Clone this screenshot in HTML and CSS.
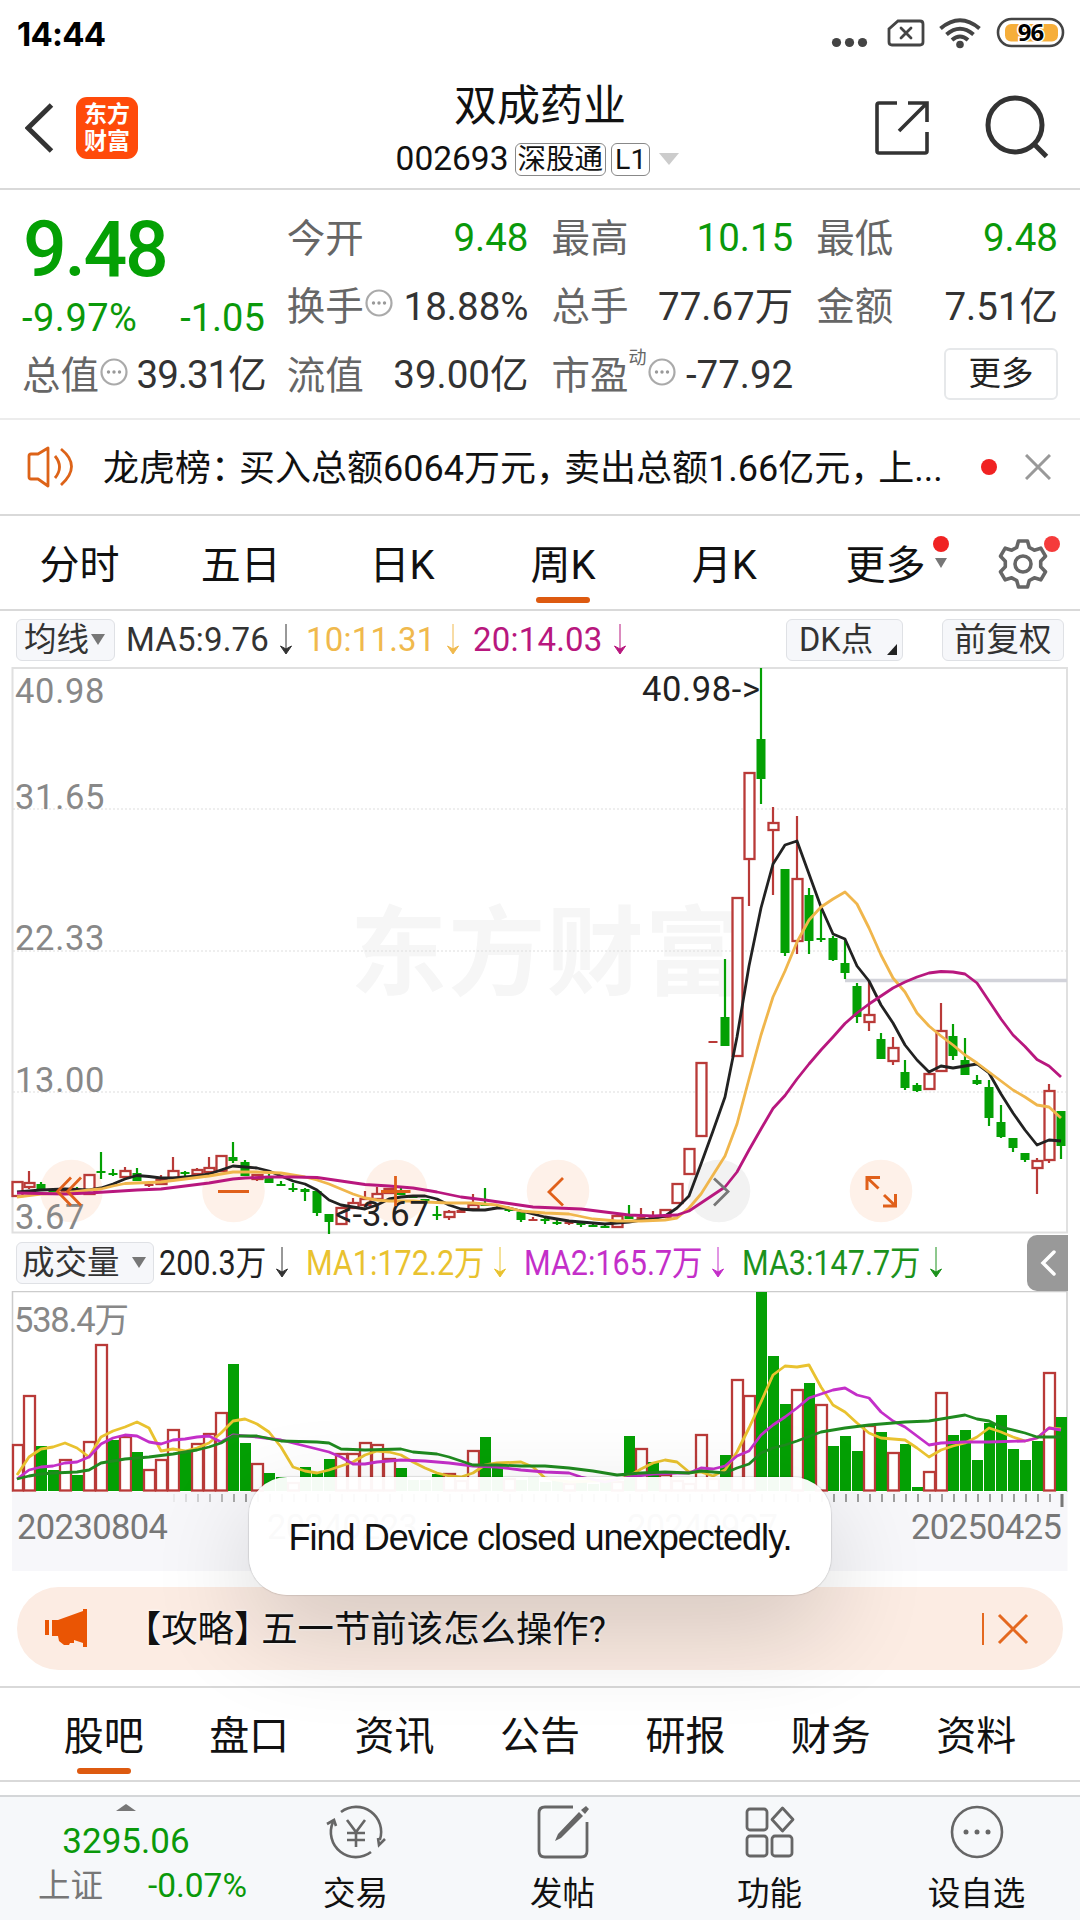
FILE: index.html
```html
<!DOCTYPE html>
<html lang="zh-CN">
<head>
<meta charset="utf-8">
<title>双成药业 002693</title>
<link rel="stylesheet" href="styles.css">
</head>
<body>
<div class="screen">
  <div class="status">
    <span class="clock">14:44</span>
    <svg class="status-icons" width="250" height="50" viewBox="824 8 250 50">
      <g fill="#444"><circle cx="836.500" cy="42.500" r="4.600"/><circle cx="849.500" cy="42.500" r="4.600"/><circle cx="862.500" cy="42.500" r="4.600"/></g>
      <path d="M898 21h22q3 0 3 3v18q0 3-3 3h-28q-3 0-3-3V29z" fill="none" stroke="#444" stroke-width="2.800"/>
      <path d="M901 28l10 10M911 28l-10 10" stroke="#444" stroke-width="2.800" stroke-linecap="round"/>
      <g fill="none" stroke="#444" stroke-width="4"><path d="M940.500 28.500Q960 12 979.500 28.500"/><path d="M946.500 34.500Q960 23 973.500 34.500"/><path d="M952 40Q960 33 968 40"/></g>
      <circle cx="960" cy="44.500" r="3.800" fill="#444"/>
      <rect x="998" y="19" width="65" height="27" rx="13.500" fill="#fff" stroke="#444" stroke-width="2.600"/>
      <rect x="1005" y="24" width="53" height="17.500" rx="6" fill="#f6ae3a"/>
      <text x="1030.500" y="41" text-anchor="middle" class="battery">96</text>
    </svg>
  </div>
  <header class="head">
    <svg class="back" width="30" height="50" viewBox="0 0 30 50"><path d="M26.500 2L3 25l23.500 23" fill="none" stroke="#333" stroke-width="5"/></svg>
    <div class="logo"><span>东方</span><span>财富</span></div>
    <div class="title">
      <h1>双成药业</h1>
      <div class="code"><span>002693</span><b>深股通</b><b class="level">L1</b><i></i></div>
    </div>
    <svg class="share" width="54" height="54" viewBox="0 0 54 54"><path d="M22 2H4Q2 2 2 4v46q0 2 2 2h46q2 0 2-2V31M33 2h19v19M52 2L24 30" fill="none" stroke="#333" stroke-width="3.600"/></svg>
    <svg class="search" width="66" height="66" viewBox="0 0 66 66"><circle cx="30" cy="31" r="27" fill="none" stroke="#333" stroke-width="5"/><path d="M48 49l13.500 13.500" stroke="#333" stroke-width="5"/></svg>
  </header>

  <section class="quote">
    <div class="now"><strong>9.48</strong><div class="pair green"><span>-9.97%</span><span>-1.05</span></div></div>
    <div class="cell"><label>今开</label><span class="green">9.48</span></div>
    <div class="cell"><label>最高</label><span class="green">10.15</span></div>
    <div class="cell"><label>最低</label><span class="green">9.48</span></div>
    <div class="cell"><label>换手<svg class="info" viewBox="0 0 28 28"><use href="#info"/></svg></label><span>18.88%</span></div>
    <div class="cell"><label>总手</label><span>77.67万</span></div>
    <div class="cell"><label>金额</label><span>7.51亿</span></div>
    <div class="cell tight"><label>总值<svg class="info" viewBox="0 0 28 28"><use href="#info"/></svg></label><span>39.31亿</span></div>
    <div class="cell"><label>流值</label><span>39.00亿</span></div>
    <div class="cell"><label>市盈<sup>动</sup><svg class="info" viewBox="0 0 28 28"><use href="#info"/></svg></label><span>-77.92</span></div>
    <button class="more">更多</button>
  </section>
  <svg class="defs" width="0" height="0"><defs>
    <g id="info"><circle cx="14" cy="14" r="12.500" fill="none" stroke="#aaa" stroke-width="2.200"/><g fill="#999"><circle cx="8.500" cy="14" r="1.700"/><circle cx="14" cy="14" r="1.700"/><circle cx="19.500" cy="14" r="1.700"/></g></g>
    <path id="down" d="M7 0v29M1.500 22L7 30l5.500-8L7 25z" stroke="currentColor" stroke-width="1" fill="currentColor"/>
  </defs></svg>

  <section class="notice">
    <svg width="48" height="42" viewBox="0 0 48 42"><path d="M2 10q0-2 2-2h7L21 2v38L11 33H4q-2 0-2-2zM28 10q9 11 0 22M34 3q21 17 0 36" fill="none" stroke="#dd6318" stroke-width="2.800" stroke-linejoin="round"/></svg>
    <p>龙虎榜<u>：</u>买入总额6064万元<u>，</u>卖出总额1.66亿元<u>，</u>上...</p>
    <i class="dot"></i>
    <svg class="close" width="26" height="26" viewBox="0 0 26 26"><path d="M1 1l24 24M25 1L1 25" stroke="#999" stroke-width="3"/></svg>
  </section>

  <nav class="periods">
    <a>分时</a><a>五日</a><a>日K</a><a class="on">周K</a><a>月K</a><a class="morek">更多<i class="dot"></i><i class="tri"></i></a>
    <span class="gear"><svg width="50" height="50" viewBox="0 0 50 50"><path d="M20.500 2h9l1.800 6.500 5 2.700 6.500-2 4.700 8-4.800 5v5.600l4.800 5-4.700 8-6.500-2-5 2.700L29.500 48h-9l-1.800-6.500-5-2.700-6.500 2-4.700-8 4.800-5v-5.600l-4.800-5 4.700-8 6.500 2 5-2.700z" fill="none" stroke="#666" stroke-width="3.600" stroke-linejoin="round"/><circle cx="25" cy="25" r="8" fill="none" stroke="#666" stroke-width="3.600"/></svg><i class="dot"></i></span>
  </nav>

  <div class="legend">
    <span class="chip avg">均线<i class="tri"></i></span>
    <span class="ma ma5">MA5:9.76</span><svg class="arrow a5" viewBox="0 0 14 32"><use href="#down"/></svg>
    <span class="ma ma10">10:11.31</span><svg class="arrow a10" viewBox="0 0 14 32"><use href="#down"/></svg>
    <span class="ma ma20">20:14.03</span><svg class="arrow a20" viewBox="0 0 14 32"><use href="#down"/></svg>
    <span class="chip dk">DK点<i class="corner"></i></span>
    <span class="chip adj">前复权</span>
  </div>
  <svg id="price" class="plot" width="1080" height="567" viewBox="0 667 1080 567"></svg>

  <div class="legend vol">
    <span class="chip kind">成交量<i class="tri"></i></span>
    <span class="v v0"><em>200.3万</em></span><svg class="arrow" viewBox="0 0 14 32"><use href="#down"/></svg>
    <span class="v y"><em>MA1:172.2万</em></span><svg class="arrow y" viewBox="0 0 14 32"><use href="#down"/></svg>
    <span class="v p"><em>MA2:165.7万</em></span><svg class="arrow p" viewBox="0 0 14 32"><use href="#down"/></svg>
    <span class="v g"><em>MA3:147.7万</em></span><svg class="arrow g" viewBox="0 0 14 32"><use href="#down"/></svg>
    <span class="expand"><svg width="16" height="28" viewBox="0 0 16 28"><path d="M14 3L3 14l11 11" fill="none" stroke="#fff" stroke-width="3.500" stroke-linecap="round"/></svg></span>
  </div>
  <svg id="volume" class="plot" width="1080" height="280" viewBox="0 1291 1080 280"></svg>

  <div class="banner">
    <svg width="44" height="40" viewBox="0 0 44 40"><path d="M1 11h4v15H1zM8 11h6L39 2V0h4v38h-4v-4l-9-3v3h-4l-1 2h-5l-5-4-1-5H8z" fill="#ea5504"/></svg>
    <p><u>【</u>攻略<u>】</u>五一节前该怎么操作?</p>
    <i class="bar"></i>
    <svg width="32" height="32" viewBox="0 0 32 32"><path d="M2 2l28 28M30 2L2 30" stroke="#e4681f" stroke-width="3"/></svg>
  </div>

  <nav class="sections"><a class="on">股吧</a><a>盘口</a><a>资讯</a><a>公告</a><a>研报</a><a>财务</a><a>资料</a></nav>

  <footer class="dock">
    <div class="index"><i></i><b>3295.06</b><p><span>上证</span><em>-0.07%</em></p></div>
    <div class="tool"><svg width="60" height="56" viewBox="0 0 60 56"><g fill="none" stroke="#666" stroke-width="2.600"><path d="M15 8A25 25 0 0 1 53.800 36M45 48A25 25 0 0 1 7 18"/><path d="M1 20l7-4 2 6M59 35l-6 6-1-7"/><path d="M21 16l9 12 9-12M30 28v15M21 29h18M21 36h18"/></g></svg><span>交易</span></div>
    <div class="tool"><svg width="60" height="56" viewBox="0 0 60 56"><path d="M40 3H12q-6 0-6 6v38q0 6 6 6h36q6 0 6-6V18" fill="none" stroke="#666" stroke-width="2.800"/><path d="M53 2l3 3-4 5-4-4zM46 8l4 4-22 22-6 3 3-7z" fill="#666"/></svg><span>发帖</span></div>
    <div class="tool"><svg width="60" height="56" viewBox="0 0 60 56"><g fill="none" stroke="#666" stroke-width="2.800"><rect x="7" y="5" width="20" height="21" rx="3"/><rect x="7" y="32" width="20" height="20" rx="3"/><rect x="32" y="32" width="20" height="20" rx="3"/><path d="M42.500 4L53 15.500 42.500 27 32 15.500z" stroke-linejoin="round"/></g></svg><span>功能</span></div>
    <div class="tool"><svg width="60" height="56" viewBox="0 0 60 56"><circle cx="30" cy="28" r="25" fill="none" stroke="#666" stroke-width="2.600"/><g fill="#666"><circle cx="19" cy="28" r="2.500"/><circle cx="30" cy="28" r="2.500"/><circle cx="41" cy="28" r="2.500"/></g></svg><span>设自选</span></div>
  </footer>
  <div class="toast">Find Device closed unexpectedly.</div>
</div>
<script src="chart.js"></script>
</body>
</html>
```
FILE: styles.css
```css
* { box-sizing: border-box; }
body { margin: 0; background: #fff; color: #111; font-family: Roboto, "Noto Sans CJK SC", sans-serif; }
h1, p { margin: 0; font-weight: 400; }
i, em { font-style: normal; }
u { text-decoration: none; }
a, span { white-space: nowrap; }
.screen { position: relative; width: 1080px; height: 1920px; overflow: hidden; display: flex; flex-direction: column; }
.defs { position: absolute; }
.green { color: #0a990a; }
.dot { width: 16px; height: 16px; border-radius: 50%; background: #f02222; }
.tri { border: 6px solid transparent; border-top: 10px solid #777; border-bottom: 0; }

.status { height: 66px; flex: none; display: flex; justify-content: space-between; padding: 8px 6px 0 17px; }
.clock { font: 700 33px/53px Inter, sans-serif; letter-spacing: -.8px; color: #000; }
.battery { font: 700 24px "Open Sans", sans-serif; stroke: #fff; stroke-width: 3px; paint-order: stroke; letter-spacing: -1px; }

.head { height: 124px; flex: none; border-bottom: 2px solid #d9d9d9; display: flex; padding-left: 25px; }
.back { margin-top: 37px; }
.logo { width: 62px; height: 62px; margin: 31px 0 0 21px; border-radius: 11px; background: #ff4a0a; color: #fff; display: flex; flex-direction: column; align-items: center; padding-top: 4px; font-weight: 700; font-size: 23px; line-height: 27px; }
.title { width: 320px; margin: 14px 0 0 242px; display: flex; flex-direction: column; align-items: center; }
.title h1 { font-size: 43px; line-height: 52px; }
.code { display: flex; align-items: center; height: 34px; margin-top: 10px; font-size: 33.500px; line-height: 34px; margin-left: -5px; }
.code b { font-weight: 400; font-size: 28.500px; line-height: 31px; height: 33px; border: 1.500px solid #888; border-radius: 6px; padding: 0 2px; margin-left: 6px; }
.code .level { padding: 0 3px; margin-left: 5px; }
.code i { border: 10px solid transparent; border-top: 12px solid #ccc; border-bottom: 0; margin-left: 9px; }
.share { margin: 35px 0 0 175px; }
.search { margin: 28px 0 0 56px; }

.quote { height: 230px; flex: none; border-bottom: 2px solid #ececec; padding: 13px 22px 0 23px; display: grid; grid-template-columns: repeat(4, 1fr); column-gap: 24px; grid-template-rows: repeat(3, 68.500px); }
.now { grid-row: span 2; }
.now strong { display: block; font-weight: 500; font-size: 77px; line-height: 94px; letter-spacing: -2.300px; color: #04a004; }
.pair { display: flex; justify-content: space-between; font-size: 38px; line-height: 42px; margin: 0 -1px 0 -1px; }
.pair span:first-child { letter-spacing: .5px; }
.cell { display: flex; justify-content: space-between; align-items: center; font-size: 38.500px; line-height: 48px; color: #333; white-space: nowrap; }
.cell > span { margin-top: 2px; }
.cell label { color: #666; display: flex; align-items: center; margin-top: 3px; margin-left: -1px; }
.cell .green { color: #0a990a; }
.tight > span { letter-spacing: -1px; margin-right: -2px; }
.info { width: 28px; height: 28px; margin-left: 1px; margin-top: -8px; }
.cell sup { font-size: 18px; line-height: 20px; align-self: flex-start; margin-top: -4px; }
.cell sup + .info { margin-left: 1px; }
.more { justify-self: end; align-self: center; width: 114px; height: 52px; border: 2px solid #e6e8ea; border-radius: 6px; background: #fff; font: 32.500px/40px "Noto Sans CJK SC", sans-serif; color: #222; padding: 0 0 6px; }

.notice { height: 96px; flex: none; border-bottom: 2px solid #d9d9d9; display: flex; align-items: center; padding-left: 27px; }
.notice p { width: 850px; margin: -4px 0 0 28px; font-size: 36px; white-space: nowrap; }
.notice u { margin-right: -8px; }
.notice .dot { margin-left: 28px; }
.notice .close { margin-left: 28px; }

.periods { height: 95px; flex: none; border-bottom: 2px solid #d9d9d9; display: flex; font-size: 40px; line-height: 99px; }
.periods a { width: 161.200px; text-align: center; position: relative; left: -1px; }
.on::after { content: ""; position: absolute; left: 50%; bottom: 6px; width: 54px; height: 6px; margin-left: -27px; border-radius: 3px; background: #dd5a10; }
.morek .dot { position: absolute; left: 128px; top: 20px; }
.morek .tri { position: absolute; left: 130px; top: 42px; border-width: 10px 6px 0; }
.gear { position: relative; margin-left: 31px; }
.gear svg { display: block; margin-top: 23px; }
.gear .dot { position: absolute; left: 46px; top: 20px; background: #f53b3b; }

.legend { height: 57px; flex: none; display: flex; align-items: center; padding-left: 16px; font-size: 33px; color: #333; }
.chip { height: 42px; display: flex; align-items: center; border: 1.500px solid #dfe1e5; border-radius: 6px; background: #f6f7fa; color: #333; font-size: 32.500px; line-height: 38px; flex: none; }
.avg { width: 99px; padding-left: 7px; }
.avg .tri { margin-left: 2px; border-width: 11px 7px 0; }
.ma { width: 147px; margin-left: 11px; }
.ma10, .ma20 { width: 140px; margin-left: 13px; letter-spacing: .2px; }
.ma5 { width: 153px; letter-spacing: .2px; }
.arrow { width: 14px; height: 32px; color: #333; flex: none; }
.arrow.a10, .ma10 { color: #f0b94d; }
.arrow.a20, .ma20 { color: #b8177e; }
.dk { width: 117px; margin-left: 159px; padding-left: 12px; position: relative; }
.corner { position: absolute; right: 5px; bottom: 5px; border-left: 10px solid transparent; border-bottom: 11px solid #222; }
.adj { width: 122px; margin-left: 39px; padding-left: 11px; }

.plot { display: block; flex: none; }
#price { margin-top: -1px; }
.plot text { font-size: 34.500px; fill: #888; }
.plot .mark { fill: #222; }
.plot .ghost { font: 700 97px "Noto Sans CJK SC", sans-serif; fill: #f6f6f6; }

.vol { color: #222; }
.kind { width: 138px; padding-left: 5px; }
.kind .tri { margin-left: 12px; border-width: 11px 7px 0; }
.v { width: 187px; margin-left: 17px; flex: none; }
.v0 { width: 115px; margin-left: 5px; }
.v em { display: inline-block; font-size: 34.500px; transform: scaleX(.885); transform-origin: left; margin-top: -5px; }
.vol .y { color: #e9c22f; } .vol .p { color: #c42fc9; } .vol .g { color: #1c921c; }
.v + .arrow { margin-left: 0; }
.v0 + .arrow { margin-left: 1px; }
.expand { width: 41px; height: 56px; margin-left: auto; margin-right: 12px; background: #999; border-radius: 10px 0 0 10px; display: flex; align-items: center; justify-content: center; }

.banner { flex: none; height: 83px; margin: 16px 17px; border-radius: 42px; background: #fcece3; display: flex; align-items: center; padding-left: 27px; }
.banner p { width: 840px; margin: -5px 0 0 55px; font-size: 36.400px; text-shadow: 0 0 3px #fff, 0 0 3px #fff; white-space: nowrap; }
.banner u { font-feature-settings: "halt"; }
.banner u + u { margin-right: 9px; }
.banner .bar { width: 1.500px; height: 32px; background: #e4681f; margin: 0 13px 0 -1px; }

.sections { height: 96px; flex: none; border: solid #d9d9d9; border-width: 2px 0; padding: 0 31px; display: flex; font-size: 40px; line-height: 97px; }
.sections a { flex: 1; text-align: center; position: relative; }
.dock { margin-top: 13px; height: 126px; flex: none; border-top: 2px solid #d4d6d8; background: #f6f8fa; display: flex; }
.index { width: 252px; display: flex; flex-direction: column; align-items: center; color: #0a990a; }
.index i { border: 10px solid transparent; border-bottom: 7px solid #777; border-top: 0; margin-top: 7px; }
.index b { font-weight: 400; font-size: 35px; line-height: 40px; margin-top: 11px; }
.index p { align-self: stretch; display: flex; justify-content: space-between; padding: 0 5px 0 38px; font-size: 33.500px; line-height: 44px; margin-top: 2px; }
.index p span { color: #777; font-size: 32.500px; }
.tool { width: 207px; display: flex; flex-direction: column; align-items: center; padding-top: 7px; font-size: 32.500px; line-height: 44px; }
.tool span { margin-top: 12px; }

.toast { position: absolute; left: 249px; top: 1477px; width: 582px; height: 118px; border-radius: 38px; background: rgba(255,255,255,.955); box-shadow: 0 0 1px 1px rgba(0,0,0,.1), 0 36px 100px rgba(0,0,0,.16); font: 36px/122px "Liberation Sans", sans-serif; letter-spacing: -.95px; text-align: center; white-space: nowrap; color: #111; }
```
FILE: chart.js
```js
const RED = '#b93a38', GREEN = '#04a004';
const X = i => 17 + i * 12;
const line = (pts, color) => {
  const p = pts.trim().split(/\s+/).map(s => { const [i, y] = s.split(':'); return X(+i) + ',' + y; });
  return `<polyline points="${p.join(' ')}" fill="none" stroke="${color}" stroke-width="2.8" stroke-linejoin="round"/>`;
};

// one entry per week: direction, body top, body bottom, high, low
const weeks = `u 1182 1196 1182 1196|u 1183 1187 1171 1189|g 1184 1189 1182 1189|g 1190 1191 1188 1195|u 1190 1192 1190 1192|g 1189 1191 1187 1192
u 1175 1194 1175 1194|g 1171 1172 1152 1179|g 1173 1174 1169 1176|u 1171 1177 1167 1180|g 1173 1181 1168 1181|u 1184 1185 1182 1187|u 1180 1184 1175 1184
u 1171 1178 1157 1178|g 1172 1174 1171 1177|u 1170 1174 1168 1176|u 1168 1172 1157 1177|u 1156 1171 1156 1171|g 1157 1161 1142 1163|g 1162 1176 1160 1176
u 1175 1179 1175 1181|g 1178 1183 1174 1183|g 1184 1185 1181 1186|g 1188 1189 1183 1192|g 1189 1192 1188 1201|g 1191 1213 1191 1216|g 1214 1222 1214 1234|u 1208 1224 1208 1224
u 1203 1208 1198 1208|u 1199 1205 1191 1205|u 1194 1199 1187 1199|u 1189 1193 1188 1193|g 1190 1195 1188 1195|g 1196 1198 1196 1198|g 1199 1202 1199 1205|g 1214 1216 1206 1220
u 1212 1217 1210 1220|u 1210 1213 1209 1213|u 1205 1209 1194 1209|g 1204 1205 1188 1205|g 1207 1208 1206 1208|g 1209 1211 1208 1212|g 1212 1220 1211 1222|u 1219 1220 1217 1221
g 1219 1220 1217 1224|g 1222 1223 1220 1225|u 1222 1224 1221 1225|g 1223 1225 1222 1227|g 1225 1226 1223 1227|g 1226 1227 1224 1228|u 1216 1227 1216 1227|g 1215 1219 1205 1219
u 1217 1220 1208 1220|u 1217 1219 1211 1219|u 1210 1217 1210 1217|u 1184 1203 1184 1203|u 1149 1174 1149 1174|u 1063 1136 1063 1136|u 1041 1041 1041 1041|g 1017 1046 959 1046
u 898 1056 898 1056|u 773 859 773 906|g 739 779 668 804|u 823 830 807 895|g 869 953 869 956|u 879 941 816 954|g 895 941 888 954|g 938 940 905 942|g 938 960 936 961|g 963 973 939 979
g 986 1017 983 1023|u 1015 1022 981 1031|g 1039 1059 1033 1059|u 1048 1061 1037 1065|g 1072 1088 1060 1090|g 1085 1091 1083 1092|u 1074 1089 1074 1089|u 1031 1071 1003 1071
g 1036 1056 1024 1060|g 1060 1075 1038 1075|g 1080 1084 1075 1085|g 1087 1118 1080 1126|g 1122 1137 1105 1138|g 1138 1148 1138 1152|g 1153 1160 1153 1162|u 1161 1168 1158 1194
u 1091 1160 1084 1163|g 1111 1146 1111 1159`.split(/[|\n]/).map(r => { const a = r.split(' '); return [a[0], ...a.slice(1).map(Number)]; });

const candles = weeks.map(([d, t, b, h, l], i) => {
  const x = X(i), c = d === 'u' ? RED : GREEN;
  let s = '';
  if (h < t) s += `<path d="M${x} ${h}V${t}" stroke="${c}" stroke-width="2.2"/>`;
  if (l > b) s += `<path d="M${x} ${b}V${l}" stroke="${c}" stroke-width="2.2"/>`;
  if (d === 'u' && b - t > 3) s += `<rect x="${x - 4.5}" y="${t}" width="10" height="${b - t}" fill="#fff" stroke="${c}" stroke-width="2.3"/>`;
  else s += `<rect x="${x - 4.5}" y="${t}" width="9" height="${Math.max(2, b - t)}" fill="${c}"/>`;
  return s;
}).join('');

const ma5 = '0:1192 1:1191 2:1190 4:1189 6:1190 7:1188 8:1184 9:1179 10:1175.5 11:1176.5 12:1178 13:1178 15:1176 16:1174 17:1170 18:1166 19:1167 20:1168 21:1171 22:1176 23:1181 24:1184 25:1190 26:1200 27:1205 28:1207 29:1209 30:1205 31:1199 32:1197 33:1196 34:1196 35:1199 36:1205 37:1209 38:1210 39:1210 40:1208 41:1208 42:1211 43:1214 44:1217 45:1219 46:1221 47:1222 48:1223 49:1224 50:1223 51:1222 52:1220 53:1219 54:1216 55:1208 56:1196 57:1164 58:1131 59:1097 60:1037 61:966 62:908 63:864 64:845 65:841 66:874 67:907 68:934 69:939 70:966 71:981 72:1005 73:1023 74:1045 75:1060 76:1072 77:1066 78:1068 79:1066 80:1064 81:1073 82:1094 83:1113 84:1130 85:1145 86:1140 87:1141';
const ma10 = '0:1197 2:1194 4:1193 6:1190 7:1189 8:1186 9:1183.5 10:1183 12:1182 14:1179 16:1176 18:1172 20:1172 22:1173 24:1177 25:1180 26:1184 28:1194 29:1198 30:1200 31:1201 33:1201 34:1202 36:1203 38:1203 40:1205 42:1211 44:1213 46:1214 48:1219 50:1221 52:1221 54:1220 55:1218 56:1208 57:1194 58:1175 59:1156 60:1124 61:1079 62:1035 63:997 64:971 65:942 66:920 67:907 68:899 69:892 70:904 71:928 72:955 73:978 74:992 75:1013 76:1026 77:1036 78:1045 79:1055 80:1063 81:1072 82:1081 83:1090 84:1097 85:1105 86:1107 87:1118';
const ma20 = '0:1193 4:1194 6:1193 8:1191.5 10:1190 12:1189 14:1186 16:1183 18:1179 19:1178 21:1177 23:1177 25:1177.5 27:1181 29:1184.5 31:1186 33:1188 35:1192 37:1197 39:1200 41:1203.5 43:1207 45:1208 47:1209 49:1212 51:1215 53:1216 55:1215 56:1211 57:1203 58:1195 59:1187 60:1172 61:1150 62:1129 63:1108.5 64:1095.5 65:1079 66:1064 67:1050 68:1037 69:1023.5 70:1013 71:1004 72:996 73:988 74:982 75:977 76:973 77:971.5 78:972 79:974 80:983 81:1001 82:1019 83:1035 84:1046.5 85:1059.5 86:1066 87:1077';

const grid = [809, 951, 1092].map(y => `<path d="M13 ${y}H1067" stroke="#ddd" stroke-width="1.2" stroke-dasharray="2 2"/>`).join('');
const discs = [71.5, 233.5, 396, 558, 719, 881].map((x, i) => `<circle cx="${x}" cy="1191" r="31.3" fill="${i === 4 ? '#f2f2f2' : '#fef1e9'}"/>`).join('');
const labels = [['40.98', 703], ['31.65', 809], ['22.33', 950], ['13.00', 1092], ['3.67', 1229]].map(([t, y]) => `<text x="15" y="${y}" letter-spacing=".7">${t}</text>`).join('');
const icons = `<g fill="none" stroke="#e0601a" stroke-width="2.8">
  <path d="M71 1177.500L57.500 1191.500L71 1205.500M81 1177.500L67.500 1191.500L81 1205.500M218 1191.500H249M395.500 1176V1206M381 1191.500H410.500M563 1178L549 1192L563 1205.500"/>
  <path d="M714 1178.500L728 1191.500L714 1205.500" stroke="#777"/>
  <path d="M867 1190V1177.500H880M868 1178.500L878.500 1188.500M895.500 1194V1206H883M894.500 1205L884 1195" stroke-width="3"/></g>`;

document.getElementById('price').innerHTML = `
  <text class="ghost" x="350" y="987" textLength="392">东方财富</text>
  <rect x="12.5" y="668" width="1054.500" height="564.500" fill="none" stroke="#e0e0e0" stroke-width="2"/>
  ${grid}${discs}${labels}
  <path d="M845 980.500H1067" stroke="#d2d3da" stroke-width="3.500"/>
  ${candles}${line(ma5, '#222')}${line(ma10, '#f0b64c')}${line(ma20, '#b8177e')}
  <text class="mark" x="642" y="701" textLength="118">40.98-&gt;</text>
  <text class="mark" x="335" y="1226" textLength="94">&lt;-3.67</text>${icons}`;

const tops = [1444,1395,1446,1470,1459,1475,1441,1344,1440,1436,1452,1469,1459,1429,1451,1443,1433,1412,1364,1443,1463,1473,1477,1482,1467,1472,1459,1453,1453,1442,1444,1458,1468,1480,1480,1474,1473,1480,1450,1437,1467,1478,1480,1477,1482,1480,1483,1482,1484,1482,1481,1436,1448,1462,1474,1480,1483,1434,1478,1455,1379,1395,1292,1356,1404,1389,1383,1404,1446,1436,1451,1425,1432,1452,1444,1487,1471,1392,1435,1430,1460,1423,1415,1449,1460,1441,1372,1417];
const falling = new Set([2,3,5,8,10,14,18,19,21,22,24,25,26,32,33,34,35,39,40,42,43,44,45,47,48,49,51,53,59,62,63,64,66,68,69,70,72,74,75,78,79,80,81,82,83,84,85,87]);
const bars = tops.map((t, i) => falling.has(i)
  ? `<rect x="${X(i) - 5}" y="${t}" width="11" height="${1491 - t}" fill="${GREEN}"/>`
  : `<rect x="${X(i) - (i ? 5 : 4)}" y="${t + 1}" width="${i ? 11 : 10}" height="${1489.5 - t}" fill="#fff" stroke="${RED}" stroke-width="2.3"/>`).join('');

const v1 = '0:1475 1:1457 2:1449 3:1447 4:1443 5:1448 6:1457 7:1437 8:1431 9:1427 10:1422 11:1428 12:1451 13:1449 14:1451 15:1448 16:1443 17:1433 18:1421 19:1419 20:1424 21:1432 22:1447 23:1467 24:1471 25:1473 26:1470 27:1466 28:1462 29:1455 30:1451 31:1452 32:1455 33:1462 34:1468 35:1473 36:1476 37:1477 38:1473 39:1465 40:1463 42:1462 43:1467 44:1478 46:1482 50:1480 51:1476 52:1469 53:1463 54:1460 55:1462 56:1472 57:1472 58:1476 59:1470 60:1452 61:1428 62:1402 63:1375 64:1366 65:1367 66:1365 67:1387 68:1405 69:1412 70:1423 71:1433 72:1438 74:1440 75:1448 76:1457 77:1450 78:1446 79:1443 80:1437 81:1428 82:1432 83:1437 84:1441 85:1438 86:1428 87:1429';
const v2 = '0:1479 1:1470 2:1467 3:1466 4:1463 5:1462 6:1457 7:1444 8:1438 9:1435 10:1436 11:1442 12:1444 13:1440 14:1439 15:1437 16:1436 17:1442 18:1435 20:1437 22:1440 24:1446 26:1452 27:1457 28:1464 29:1464 30:1462 32:1460 34:1461 36:1463 38:1466 40:1467 42:1470 44:1472 46:1473 47:1477 49:1482 51:1477 53:1474 55:1473 56:1473 57:1468 58:1469 59:1466 60:1456 61:1451 62:1435 63:1425 64:1417 65:1408 66:1398 67:1394 68:1390 69:1388 70:1395 71:1398 72:1412 73:1421 74:1427 75:1436 76:1445 77:1443 79:1442 81:1442 84:1441 85:1438 86:1428 87:1430';
const v3 = '0:1479 1:1476 2:1474 3:1473 5:1472 6:1470 7:1463 9:1459 11:1457 13:1454 15:1450 16:1447 17:1443 18:1436 20:1436 22:1441 25:1442 26:1443 27:1449 29:1450 32:1449 33:1452 35:1454 36:1457 38:1465 40:1465 42:1466 44:1466 46:1468 48:1471 50:1475 52:1473 54:1472 56:1473 57:1471 59:1473 60:1468 61:1464 62:1453 63:1448 64:1445 65:1441 67:1432 69:1428 71:1425 74:1422 76:1421 78:1417 79:1415 80:1419 81:1421 82:1427 84:1433 85:1437 87:1437';

let ticks = '';
for (let i = 13; i < 87; i++) ticks += `<path d="M${X(i) + 1} 1494V1502" stroke="#888" stroke-width="1.6" opacity="${Math.min(1, (i - 12) / 7)}"/>`;
ticks += '<path d="M1062 1494V1507" stroke="#777" stroke-width="3"/>';

document.getElementById('volume').innerHTML = `
  <path d="M12.500 1492V1291.500H1067V1492" fill="none" stroke="#ccc" stroke-width="1.500"/>
  <rect x="12" y="1492" width="1055.500" height="79" fill="#f7f7fa"/>
  <text x="14" y="1332" textLength="115">538.4万</text>
  ${bars}${line(v1, '#e9c22f')}${line(v2, '#c42fc9')}${line(v3, '#1f8a1f')}${ticks}
  <g class="dates"><text x="17" y="1539" textLength="151" style="fill:#777">20230804</text>
  <text x="267" y="1539" textLength="151">20240223</text><text x="627" y="1539" textLength="151">20240927</text>
  <text x="911" y="1539" textLength="151" style="fill:#777">20250425</text></g>`;
```
